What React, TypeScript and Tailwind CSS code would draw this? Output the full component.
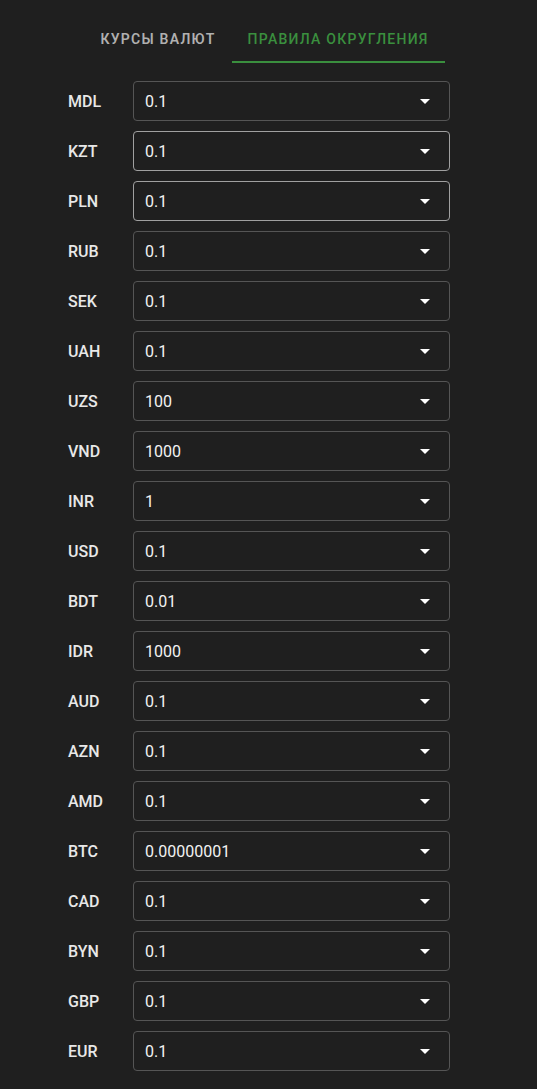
const ROWS: [string, string, boolean?][] = [
  ["MDL", "0.1"],
  ["KZT", "0.1", true],
  ["PLN", "0.1", true],
  ["RUB", "0.1"],
  ["SEK", "0.1"],
  ["UAH", "0.1"],
  ["UZS", "100"],
  ["VND", "1000"],
  ["INR", "1"],
  ["USD", "0.1"],
  ["BDT", "0.01"],
  ["IDR", "1000"],
  ["AUD", "0.1"],
  ["AZN", "0.1"],
  ["AMD", "0.1"],
  ["BTC", "0.00000001"],
  ["CAD", "0.1"],
  ["BYN", "0.1"],
  ["GBP", "0.1"],
  ["EUR", "0.1"],
];

function Caret() {
  return (
    <svg width="24" height="24" viewBox="0 0 24 24" className="fill-white">
      <path d="M7 10l5 5 5-5z" />
    </svg>
  );
}

export default function App() {
  return (
    <div className="min-h-[1089px] bg-[#1f1f1f] font-['Roboto',sans-serif] pt-[15px]">
      {/* Tabs */}
      <div className="flex justify-center">
        <div className="flex ml-[-8px]">
          <div className="h-[48px] px-4 flex items-center whitespace-nowrap text-[14px] font-semibold uppercase tracking-[0.09em] text-[#b0b0b0]">
            Курсы валют
          </div>
          <div className="relative h-[48px] w-[213px] flex items-center justify-center whitespace-nowrap text-[14px] font-medium uppercase tracking-[0.09em] text-[#3a8f3e]">
            Правила округления
            <span className="absolute left-0 right-0 bottom-0 h-[2px] bg-[#3a8f3e]" />
          </div>
        </div>
      </div>

      {/* Rounding rules */}
      <div className="mt-[18px] pl-[68px] flex flex-col gap-[10px]">
        {ROWS.map(([code, val, hi]) => (
          <div key={code} className="flex items-center">
            <div className="w-[65px] pt-px text-[16px] font-medium text-[#e8e8e8]">{code}</div>
            <div
              className={
                "w-[317px] h-[40px] rounded-[4px] border flex items-center justify-between pl-[11px] pr-[12px] " +
                (hi ? "border-[#a0a0a0]" : "border-[#555555]")
              }
            >
              <span className="pt-[2px] text-[16px] text-[#f2f2f2]">{val}</span>
              <Caret />
            </div>
          </div>
        ))}
      </div>
    </div>
  );
}
